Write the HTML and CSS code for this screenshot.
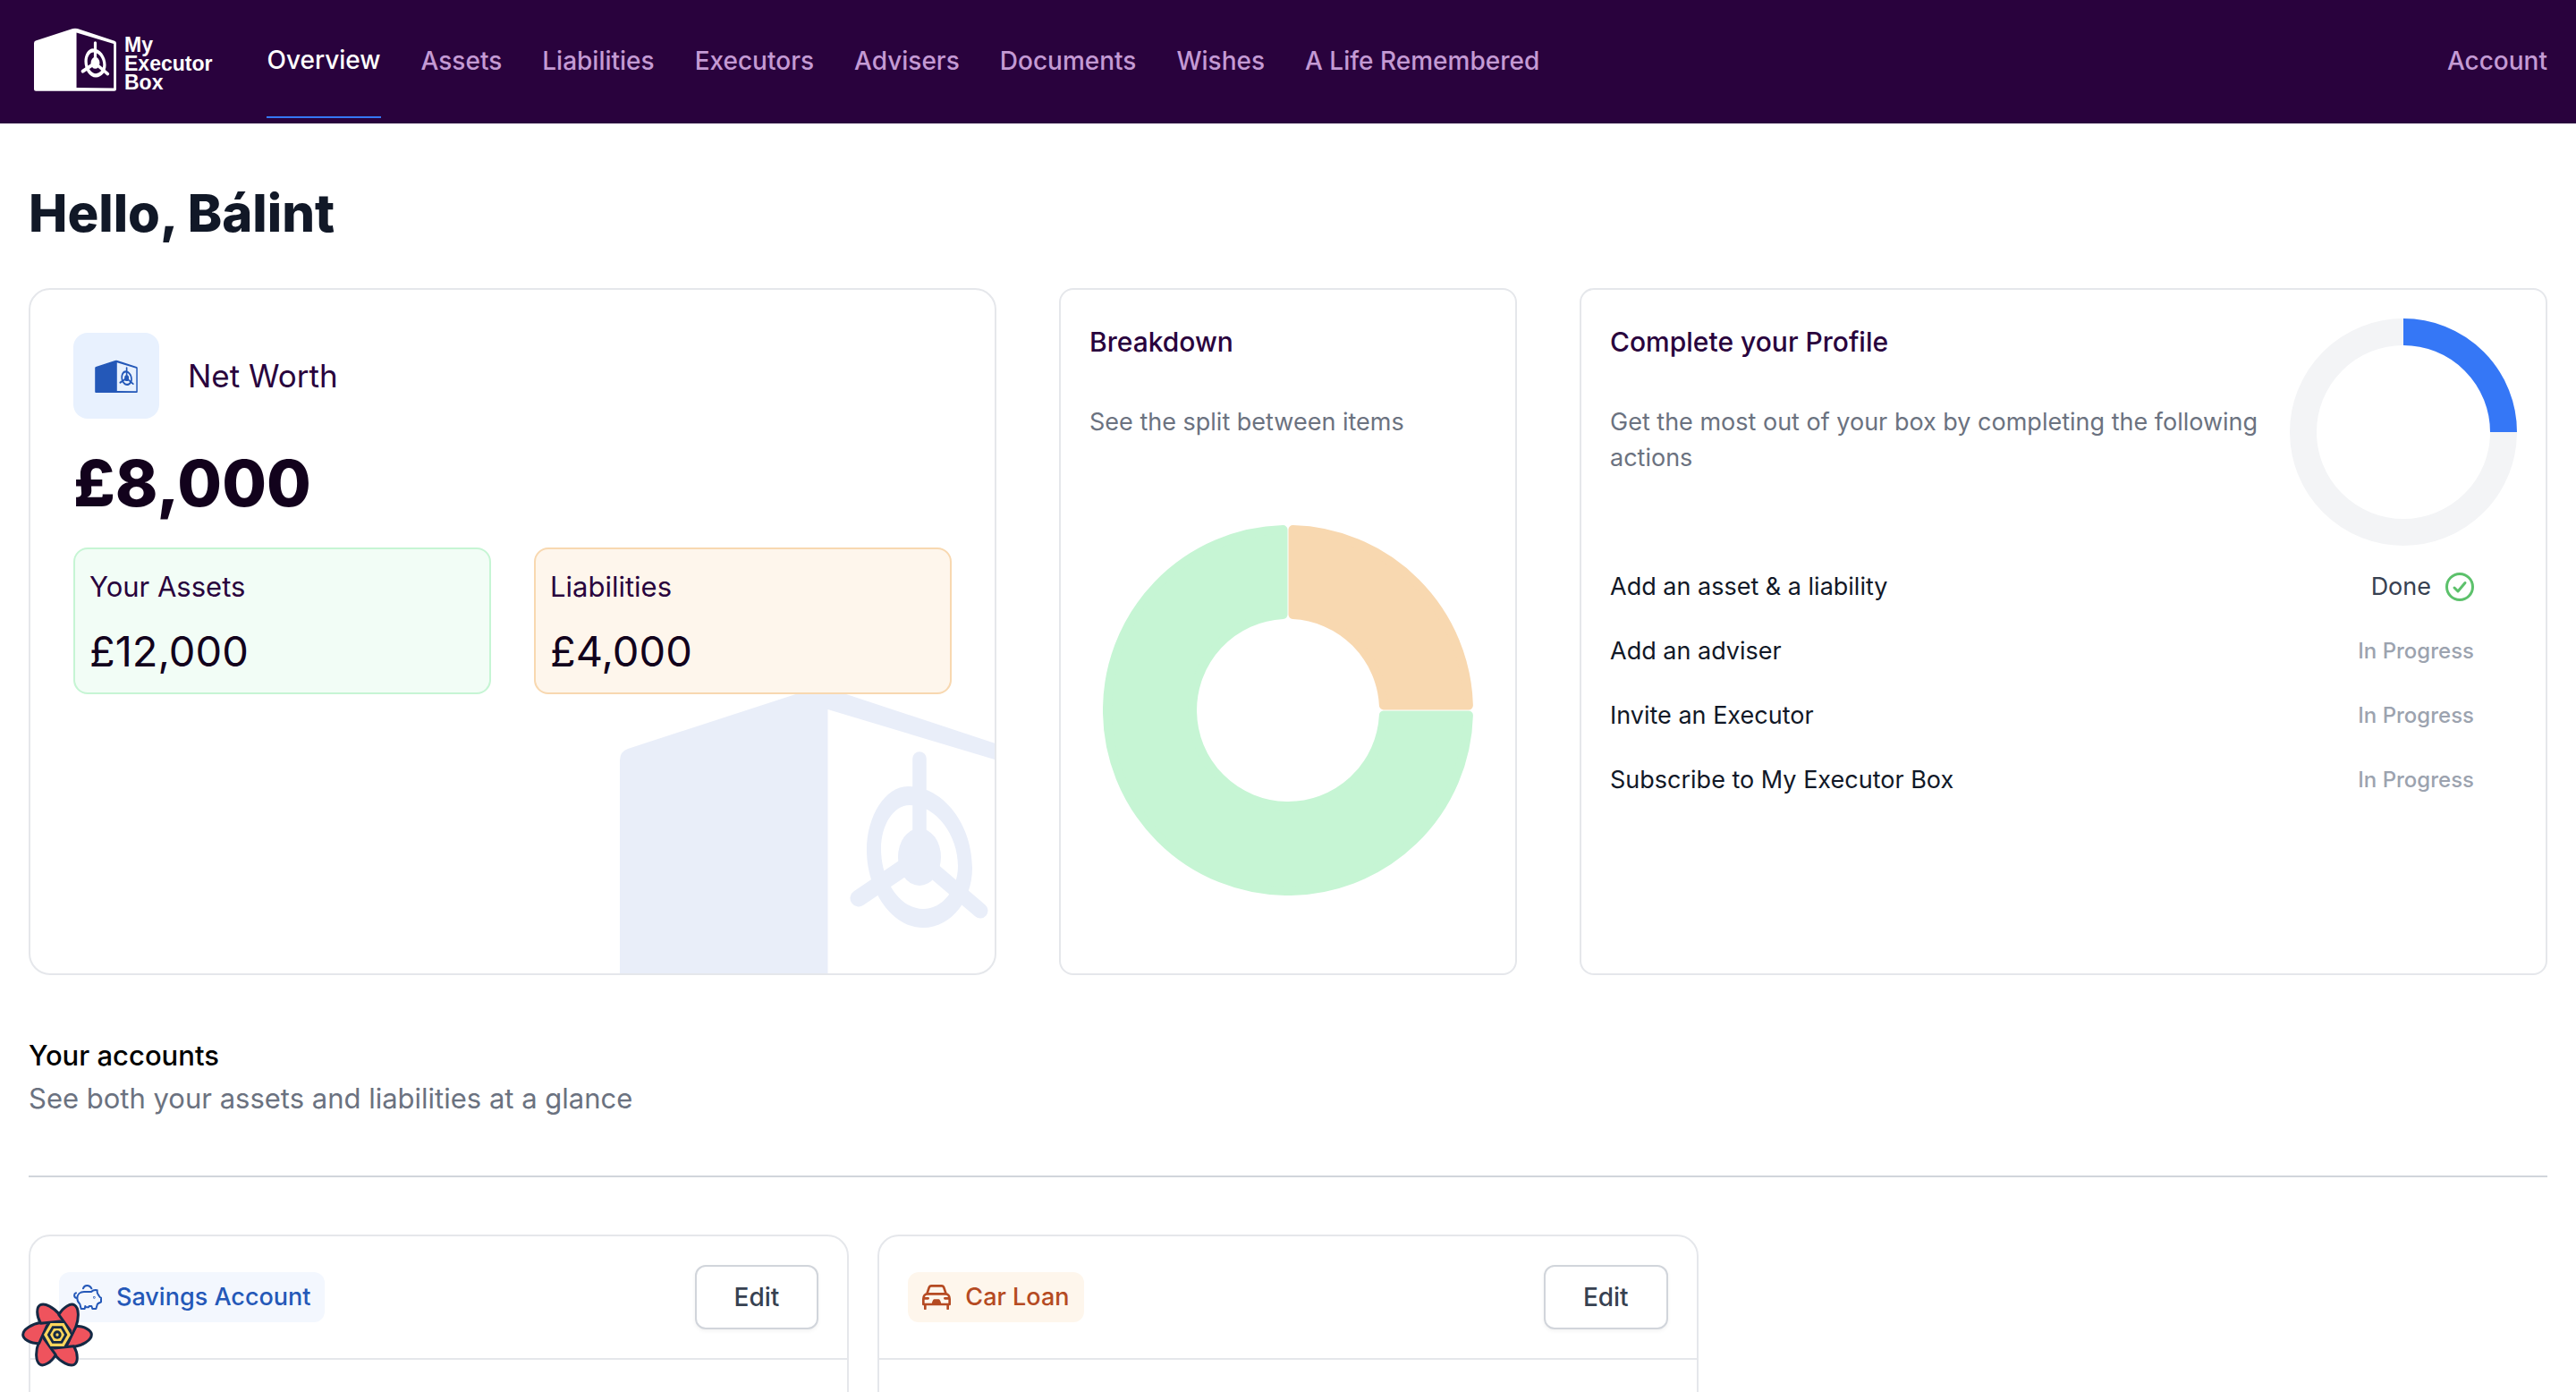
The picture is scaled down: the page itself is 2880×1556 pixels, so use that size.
FILE: index.html
```html
<!DOCTYPE html>
<html lang="en">
<head>
<meta charset="utf-8">
<meta name="viewport" content="width=device-width, initial-scale=1">
<title>Overview – My Executor Box</title>
<link rel="stylesheet" href="styles.css">
</head>
<body>
<svg class="sprite" aria-hidden="true">
  <symbol id="box" viewBox="0 0 450 350">
    <path fill="currentColor" fill-rule="evenodd" d="M0 88Q0 78 9 75L212 9Q225 5 238 9L441 76Q450 79 450 88V340Q450 350 440 350H10Q0 350 0 340ZM232.500 31V331L436 334V92Z"/>
    <path fill="currentColor" fill-rule="evenodd" d="M276 188C276 150 297 117 322 117C362 117 394 160 394 208C394 245 370 275 339 275C303 275 276 232 276 188ZM292 187C292 222 313 254 339 254C361 254 378 232 378 206C378 172 354 138 324 138C306 138 292 160 292 187Z"/>
    <ellipse cx="335" cy="196" rx="24" ry="32" fill="currentColor"/>
    <path stroke="currentColor" stroke-linecap="round" stroke-width="15.500" d="M335 86V196"/>
    <path stroke="currentColor" stroke-linecap="round" stroke-width="19" d="M335 196L267 242"/>
    <path stroke="currentColor" stroke-linecap="round" stroke-width="17" d="M335 198L403 256"/>
  </symbol>
</svg>

<header class="topbar">
  <a class="logo" href="#" aria-label="My Executor Box">
    <svg class="logo-mark" aria-hidden="true"><use href="#box"/></svg>
    <span class="logo-name">My<br>Executor<br>Box</span>
  </a>
  <nav class="nav" aria-label="Main">
    <a class="nav-link is-active" href="#" aria-current="page">Overview</a>
    <a class="nav-link" href="#">Assets</a>
    <a class="nav-link" href="#">Liabilities</a>
    <a class="nav-link" href="#">Executors</a>
    <a class="nav-link" href="#">Advisers</a>
    <a class="nav-link" href="#">Documents</a>
    <a class="nav-link" href="#">Wishes</a>
    <a class="nav-link" href="#">A Life Remembered</a>
  </nav>
  <a class="nav-link account" href="#">Account</a>
</header>

<main class="page">
  <h1 class="greeting">Hello, Bálint</h1>

  <div class="summary">
    <section class="card worth">
      <svg class="watermark" aria-hidden="true"><use href="#box"/></svg>
      <div class="worth-head">
        <span class="worth-icon"><svg aria-hidden="true"><use href="#box"/></svg></span>
        <h2 class="worth-title">Net Worth</h2>
      </div>
      <p class="worth-total">£8,000</p>
      <div class="tiles">
        <div class="tile tile-assets">
          <h3 class="tile-label">Your Assets</h3>
          <p class="tile-value">£12,000</p>
        </div>
        <div class="tile tile-liabilities">
          <h3 class="tile-label">Liabilities</h3>
          <p class="tile-value">£4,000</p>
        </div>
      </div>
    </section>

    <section class="card breakdown">
      <h2 class="card-title">Breakdown</h2>
      <p class="card-text">See the split between items</p>
      <div class="chart">
        <svg class="pie" viewBox="0 0 414 414" role="img" aria-label="Assets 75%, liabilities 25%">
          <path class="pie-liabilities" d="M212.500 5.100A202 202 0 0 1 408.900 201.500H313.900A107 107 0 0 0 212.500 100.100Z"/>
          <path class="pie-assets" d="M408.900 212.500A202 202 0 1 1 201.500 5.100V100.100A107 107 0 1 0 313.900 212.500Z"/>
        </svg>
      </div>
    </section>

    <section class="card profile">
      <div class="profile-head">
        <div class="profile-intro">
          <h2 class="card-title">Complete your Profile</h2>
          <p class="card-text">Get the most out of your box by completing the following actions</p>
        </div>
        <svg class="ring" viewBox="0 0 254 254" role="img" aria-label="25% complete">
          <circle class="ring-track" cx="127" cy="127" r="112"/>
          <path class="ring-value" d="M127 15A112 112 0 0 1 239 127"/>
        </svg>
      </div>
      <ul class="steps">
        <li class="step">Add an asset &amp; a liability
          <span class="done">Done
            <svg class="check" viewBox="0 0 32 32" aria-hidden="true"><circle cx="16" cy="16" r="14.500"/><path d="M10 17L14 21L22 11.500"/></svg>
          </span>
        </li>
        <li class="step">Add an adviser <span class="pending">In Progress</span></li>
        <li class="step">Invite an Executor <span class="pending">In Progress</span></li>
        <li class="step">Subscribe to My Executor Box <span class="pending">In Progress</span></li>
      </ul>
    </section>
  </div>

  <section class="accounts">
    <h2 class="accounts-title">Your accounts</h2>
    <p class="accounts-text">See both your assets and liabilities at a glance</p>
    <hr class="rule">
    <div class="account-grid">
      <article class="account-card">
        <div class="account-head">
          <h3 class="badge badge-blue">
            <svg class="badge-icon" viewBox="0 0 96 84" aria-hidden="true">
              <path d="M9 28C1 30 1 44 12 45M33 13C35 6 40 3 46 3C53 3 58 6 61 13M13 46C13 32 23 24 36 24H60C66 18 73 17 80 19C79 26 80 30 84 34C87 38 87 43 93 44V58C88 61 84 62 81 65L76 81H64L61 72H53L51 76L42 76L40 72L38 81H26L22 65C16 60 13 54 13 46Z"/>
              <circle cx="70" cy="43" r="1"/>
            </svg>
            Savings Account
          </h3>
          <button class="edit" type="button">Edit</button>
        </div>
      </article>
      <article class="account-card">
        <div class="account-head">
          <h3 class="badge badge-orange">
            <svg class="badge-icon" viewBox="0 0 96 84" aria-hidden="true">
              <path class="car" d="M16 31L23 10Q25 4 31 4H65Q71 4 73 10L80 31M4 66V48C4 38 10 31 18 31H78C86 31 92 38 92 48V66ZM10 66V81M86 66V81M6 46H20M76 46H90"/>
              <path class="fill" d="M32 65C34 55 37 49 41 49H55C59 49 62 55 64 65Z"/>
            </svg>
            Car Loan
          </h3>
          <button class="edit" type="button">Edit</button>
        </div>
      </article>
    </div>
  </section>
</main>

<button class="devtools" type="button" aria-label="Open query devtools">
  <svg viewBox="-120 -108 240 216" aria-hidden="true">
    <defs>
      <path id="petal" d="M61 -29C92 -29 115 -14 115 0C115 18 85 36 53 41L-10 45L34 31Z"/>
    </defs>
    <g class="petals">
      <use href="#petal"/>
      <use href="#petal" transform="rotate(60)"/>
      <use href="#petal" transform="rotate(120)"/>
      <use href="#petal" transform="rotate(180)"/>
      <use href="#petal" transform="rotate(240)"/>
      <use href="#petal" transform="rotate(300)"/>
    </g>
    <path class="navy" d="M51 0L25.500 44H-25.500L-51 0L-25.500 -44H25.500Z"/>
    <path class="gold" d="M45 0L22.500 39H-22.500L-45 0L-22.500 -39H22.500Z"/>
    <path class="navy" d="M34 0L17 29H-17L-34 0L-17 -29H17Z"/>
    <path class="gold" d="M24 0L12 21H-12L-24 0L-12 -21H12Z"/>
    <circle class="navy" r="14"/>
    <circle class="gold" r="5"/>
  </svg>
</button>
</body>
</html>
```
FILE: styles.css
```css
*,
*::before,
*::after {
  box-sizing: border-box;
}

body {
  margin: 0;
  background: #fff;
  color: #111827;
  font-family: Inter, "Liberation Sans", sans-serif;
  font-size: 27px;
  line-height: 40px;
}

h1, h2, h3, p, ul {
  margin: 0;
  padding: 0;
  font-weight: 400;
}

ul {
  list-style: none;
}

a {
  color: inherit;
  text-decoration: none;
}

button {
  font: inherit;
  cursor: pointer;
}

.sprite {
  position: absolute;
  width: 0;
  height: 0;
}

/* Top bar */
.topbar {
  display: flex;
  align-items: center;
  height: 138px;
  padding: 0 32px 0 38px;
  border-bottom: 2px solid #29023d;
  background: #29023d;
}

.logo {
  display: flex;
  align-items: flex-start;
  gap: 9px;
  margin-right: 61px;
  padding-bottom: 4px;
  color: #fff;
}

.logo-mark {
  width: 92px;
  height: 72px;
}

.logo-name {
  padding-top: 10px;
  font: 700 23px/21px "Liberation Sans", Arial, sans-serif;
}

.nav {
  display: flex;
  align-items: center;
  gap: 45px;
}

.nav-link {
  color: #c49ad4;
  font-size: 28px;
  font-weight: 500;
}

.nav-link.is-active {
  height: 128px;
  border-bottom: 2px solid #3577f6;
  color: #fff;
  line-height: 126px;
}

.account {
  margin-left: auto;
}

/* Page */
.page {
  padding: 64px 32px 0;
}

.greeting {
  font-size: 58px;
  font-weight: 800;
  line-height: 72px;
}

.summary {
  display: grid;
  grid-template-columns: 1fr 512px 1fr;
  gap: 70px;
  margin-top: 48px;
}

.card {
  display: flex;
  flex-direction: column;
  min-height: 768px;
  padding: 32px;
  border: 2px solid #e5e7eb;
  border-radius: 16px;
  background: #fff;
}

.card-title {
  color: #29023d;
  font-size: 30px;
  font-weight: 500;
  line-height: 52px;
}

.card-text {
  margin-top: 44px;
  color: #6b7280;
}

/* Net worth */
.worth {
  position: relative;
  overflow: hidden;
  padding: 48px;
  border-radius: 24px;
}

.watermark {
  position: absolute;
  right: -31px;
  bottom: -24px;
  width: 450px;
  height: 350px;
  color: #e9eef9;
}

.worth-head {
  display: flex;
  align-items: center;
  gap: 32px;
}

.worth-icon {
  display: grid;
  place-items: center;
  width: 96px;
  height: 96px;
  border-radius: 16px;
  background: #e8f1fe;
  color: #2458b8;
}

.worth-icon svg {
  width: 48px;
  height: 37px;
}

.worth-title {
  color: #29023d;
  font-size: 35px;
}

.worth-total {
  margin: 36px 0;
  color: #12021c;
  font-size: 72px;
  font-weight: 800;
  line-height: 72px;
}

.tiles {
  position: relative;
  display: grid;
  grid-template-columns: 1fr 1fr;
  gap: 48px;
}

.tile {
  display: grid;
  gap: 12px;
  padding: 18px 16px 10px;
  border: 2px solid;
  border-radius: 16px;
}

.tile-assets {
  border-color: #c6f5d4;
  background: #f2fdf6;
}

.tile-liabilities {
  border-color: #f8d8b0;
  background: #fef6ec;
}

.tile-label {
  color: #29023d;
  font-size: 31px;
  line-height: 48px;
}

.tile-value {
  color: #12021c;
  font-size: 47px;
  line-height: 72px;
}

/* Breakdown */
.chart {
  display: grid;
  flex: 1;
  place-items: center;
  padding-top: 40px;
}

.pie {
  width: 414px;
  height: 414px;
  stroke-linejoin: round;
  stroke-width: 10px;
}

.pie-liabilities {
  fill: #f8d8b0;
  stroke: #f8d8b0;
}

.pie-assets {
  fill: #c6f5d4;
  stroke: #c6f5d4;
}

/* Profile */
.profile-head {
  display: flex;
  gap: 16px;
}

.profile-intro {
  flex: 1;
}

.ring {
  flex: none;
  width: 254px;
  height: 254px;
  fill: none;
  stroke-width: 30px;
}

.ring-track {
  stroke: #f3f4f6;
}

.ring-value {
  stroke: #3577f6;
}

.steps {
  padding: 10px 48px 0 0;
}

.step {
  display: flex;
  align-items: center;
  justify-content: space-between;
  height: 72px;
}

.done {
  display: flex;
  align-items: center;
  gap: 16px;
  color: #374151;
}

.check {
  width: 32px;
  height: 32px;
  fill: none;
  stroke: #5cc16b;
  stroke-linecap: round;
  stroke-linejoin: round;
  stroke-width: 3px;
}

.pending {
  color: #9ca3af;
  font-size: 24px;
  font-weight: 500;
}

/* Accounts */
.accounts {
  margin-top: 66px;
  font-size: 31px;
  line-height: 48px;
}

.accounts-title {
  color: #000;
  font-size: 31px;
  font-weight: 500;
}

.accounts-text {
  color: #6b7280;
}

.rule {
  height: 2px;
  margin: 62px 0 64px;
  border: 0;
  background: #d1d5db;
}

.account-grid {
  display: grid;
  grid-template-columns: repeat(3, 1fr);
  gap: 32px;
}

.account-card {
  min-height: 320px;
  border: 2px solid #e5e7eb;
  border-radius: 24px;
}

.account-head {
  display: flex;
  align-items: center;
  justify-content: space-between;
  padding: 32px;
  border-bottom: 2px solid #e5e7eb;
}

.badge {
  display: flex;
  align-items: center;
  gap: 16px;
  height: 56px;
  padding: 0 16px;
  border-radius: 12px;
  font-size: 27px;
  font-weight: 500;
}

.badge-blue {
  background: #f3f7fe;
  color: #2458b8;
}

.badge-orange {
  background: #fef6ec;
  color: #b54a22;
}

.badge-icon {
  width: 32px;
  height: 28px;
  fill: none;
  stroke: currentColor;
  stroke-linecap: round;
  stroke-linejoin: round;
  stroke-width: 6px;
}

.badge-icon .car {
  stroke-width: 8px;
}

.badge-icon .fill {
  fill: currentColor;
  stroke: none;
}

.edit {
  height: 72px;
  padding: 0 42px;
  border: 2px solid #d1d5db;
  border-radius: 12px;
  background: #fff;
  box-shadow: 0 2px 4px rgba(0, 0, 0, 0.05);
  color: #374151;
  font-size: 28px;
  font-weight: 500;
}

.devtools {
  position: fixed;
  bottom: 28px;
  left: 24px;
  width: 80px;
  height: 72px;
  padding: 0;
  border: 0;
  background: none;
}

.devtools svg {
  display: block;
  width: 80px;
  height: 72px;
}

.petals {
  fill: #ef535d;
  stroke: #142944;
  stroke-linejoin: round;
  stroke-width: 9px;
}

.navy {
  fill: #142944;
}

.gold {
  fill: #ffd65c;
}
```
